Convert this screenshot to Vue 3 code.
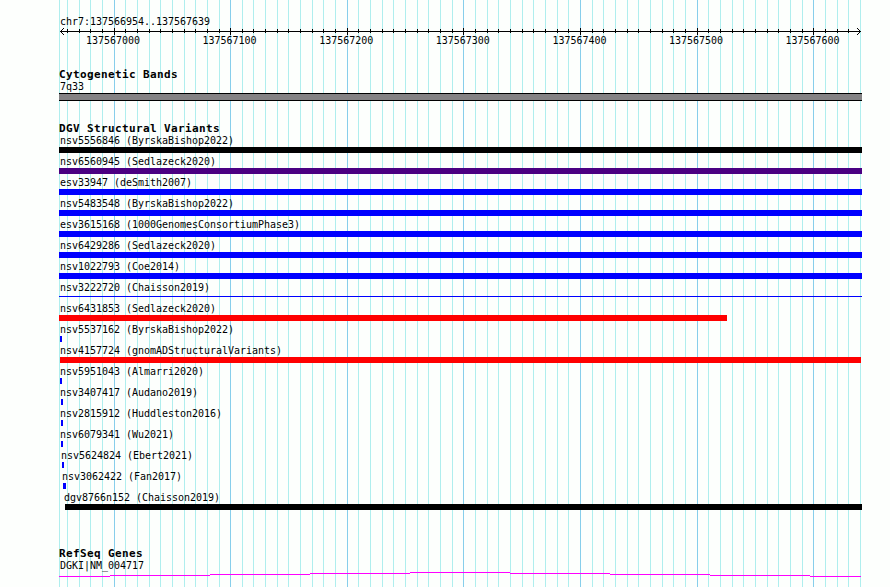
<template>
  <div class="browser">
    <svg class="grid" width="890" height="587" shape-rendering="crispEdges">
      <rect
        v-for="line in gridLines"
        :key="line.x"
        :x="line.x"
        y="0"
        width="1"
        height="587"
        :fill="line.major ? '#87ceeb' : '#afeeee'"
      />
    </svg>

    <header class="ruler">
      <div class="label region">chr7:137566954..137567639</div>
      <svg class="axis" width="803" height="7" shape-rendering="crispEdges">
        <rect x="1" y="3" width="801" height="1" />
        <rect
          v-for="tick in ticks.slice(0, -1)"
          :key="tick.x"
          :x="tick.x - 59"
          :y="tick.major ? 0 : 1"
          width="1"
          :height="tick.major ? 7 : 4"
        />
        <path d="M2 2h1v1h-1zM3 1h1v1h-1zM4 0h1v1h-1zM2 4h1v1h-1zM3 5h1v1h-1zM4 6h1v1h-1z" />
        <path d="M800 2h1v1h-1zM799 1h1v1h-1zM798 0h1v1h-1zM800 4h1v1h-1zM799 5h1v1h-1zM798 6h1v1h-1z" />
      </svg>
      <div class="numbers">
        <span v-for="n in majorNumbers" :key="n" class="label number">{{ n }}</span>
      </div>
    </header>

    <section class="track cyto">
      <h2>Cytogenetic Bands</h2>
      <div class="label">7q33</div>
      <div class="band"></div>
    </section>

    <section class="track variants">
      <h2>DGV Structural Variants</h2>
      <div v-for="v in variants" :key="v.name" class="variant">
        <div class="label" :style="{ marginLeft: (v.shift || 0) + 'px' }">
          {{ v.name }} ({{ v.study }})
        </div>
        <div
          class="bar"
          :class="[v.color, { thin: v.thin }]"
          :style="{ marginLeft: v.start - 59 + 'px', width: v.end - v.start + 'px' }"
        ></div>
      </div>
    </section>

    <section class="track genes">
      <h2>RefSeq Genes</h2>
      <div class="label">DGKI|NM_004717</div>
      <svg class="intron" width="803" height="6" shape-rendering="crispEdges">
        <rect
          v-for="s in intron"
          :key="s.x"
          :x="s.x"
          :y="s.y"
          :width="s.w"
          height="1"
          fill="#ff00ff"
        />
      </svg>
    </section>
  </div>
</template>

<script setup>
const regionStart = 137566954
const scale = 800 / 686

const toX = (pos) => Math.floor(60.4 + (pos - regionStart) * scale)

// one tick every 10 bp, a major one every 100 bp
const ticks = []
for (let pos = 137566960; pos <= 137567640; pos += 10) {
  ticks.push({ x: toX(pos), major: pos % 100 === 0 })
}
const gridLines = [{ x: 59, major: false }, ...ticks]

const majorNumbers = Array.from({ length: 7 }, (_, i) => 137567000 + i * 100)

const variants = [
  { name: 'nsv5556846', study: 'ByrskaBishop2022', color: 'black', start: 59, end: 862 },
  { name: 'nsv6560945', study: 'Sedlazeck2020', color: 'indigo', start: 59, end: 862 },
  { name: 'esv33947', study: 'deSmith2007', color: 'blue', start: 59, end: 862 },
  { name: 'nsv5483548', study: 'ByrskaBishop2022', color: 'blue', start: 59, end: 862 },
  { name: 'esv3615168', study: '1000GenomesConsortiumPhase3', color: 'blue', start: 59, end: 862 },
  { name: 'nsv6429286', study: 'Sedlazeck2020', color: 'blue', start: 59, end: 862 },
  { name: 'nsv1022793', study: 'Coe2014', color: 'blue', start: 59, end: 862 },
  { name: 'nsv3222720', study: 'Chaisson2019', color: 'blue', start: 59, end: 862, thin: true },
  { name: 'nsv6431853', study: 'Sedlazeck2020', color: 'red', start: 59, end: 727 },
  { name: 'nsv5537162', study: 'ByrskaBishop2022', color: 'blue', start: 60, end: 62 },
  { name: 'nsv4157724', study: 'gnomADStructuralVariants', color: 'red', start: 60, end: 861 },
  { name: 'nsv5951043', study: 'Almarri2020', color: 'blue', start: 60, end: 62 },
  { name: 'nsv3407417', study: 'Audano2019', color: 'blue', start: 61, end: 63 },
  { name: 'nsv2815912', study: 'Huddleston2016', color: 'blue', start: 61, end: 63 },
  { name: 'nsv6079341', study: 'Wu2021', color: 'blue', start: 61, end: 63 },
  { name: 'nsv5624824', study: 'Ebert2021', color: 'blue', start: 62, end: 64, shift: 1 },
  { name: 'nsv3062422', study: 'Fan2017', color: 'blue', start: 63, end: 66, shift: 2 },
  { name: 'dgv8766n152', study: 'Chaisson2019', color: 'black', start: 65, end: 862, shift: 4 }
]

const intron = [
  { x: 0, y: 4, w: 51 },
  { x: 51, y: 3, w: 100 },
  { x: 151, y: 2, w: 100 },
  { x: 251, y: 1, w: 100 },
  { x: 351, y: 0, w: 100 },
  { x: 451, y: 1, w: 100 },
  { x: 551, y: 2, w: 100 },
  { x: 651, y: 3, w: 100 },
  { x: 751, y: 4, w: 51 }
]
</script>

<style>
body {
  margin: 0;
  background: #fdfffd;
}
</style>

<style scoped>
.browser {
  position: relative;
  box-sizing: border-box;
  width: 890px;
  height: 587px;
  padding: 15px 28px 0 59px;
  overflow: hidden;
  background: #fdfffd;
  color: #000;
  font-family: 'DejaVu Sans Mono', 'Liberation Mono', monospace;
}
.grid {
  position: absolute;
  left: 0;
  top: 0;
}
.ruler,
.track {
  position: relative;
}
.label {
  height: 13px;
  padding-left: 1px;
  font-size: 10px;
  line-height: 13px;
  letter-spacing: -0.02px;
  white-space: pre;
}
.ruler {
  height: 53px;
}
.axis {
  display: block;
}
.numbers {
  display: flex;
  margin-left: 27px;
  margin-top: -1px;
}
.number {
  flex: 0 0 116.6px;
  box-sizing: border-box;
  padding-left: 0;
}
h2 {
  height: 12px;
  margin: 0;
  font-size: 11px;
  line-height: 14px;
  font-weight: bold;
  letter-spacing: 0.378px;
  white-space: pre;
}
.cyto {
  height: 54px;
}
.band {
  box-sizing: border-box;
  height: 8px;
  border: solid #000;
  border-width: 1px 0;
  background: #848284;
}
.variants {
  height: 425px;
}
.variant {
  height: 21px;
}
.bar {
  height: 6px;
}
.bar.thin {
  position: relative;
  top: 2px;
  height: 1px;
}
.black {
  background: #000;
}
.indigo {
  background: #4b0082;
}
.blue {
  background: #00f;
}
.red {
  background: #f00;
}
.intron {
  display: block;
}
</style>
